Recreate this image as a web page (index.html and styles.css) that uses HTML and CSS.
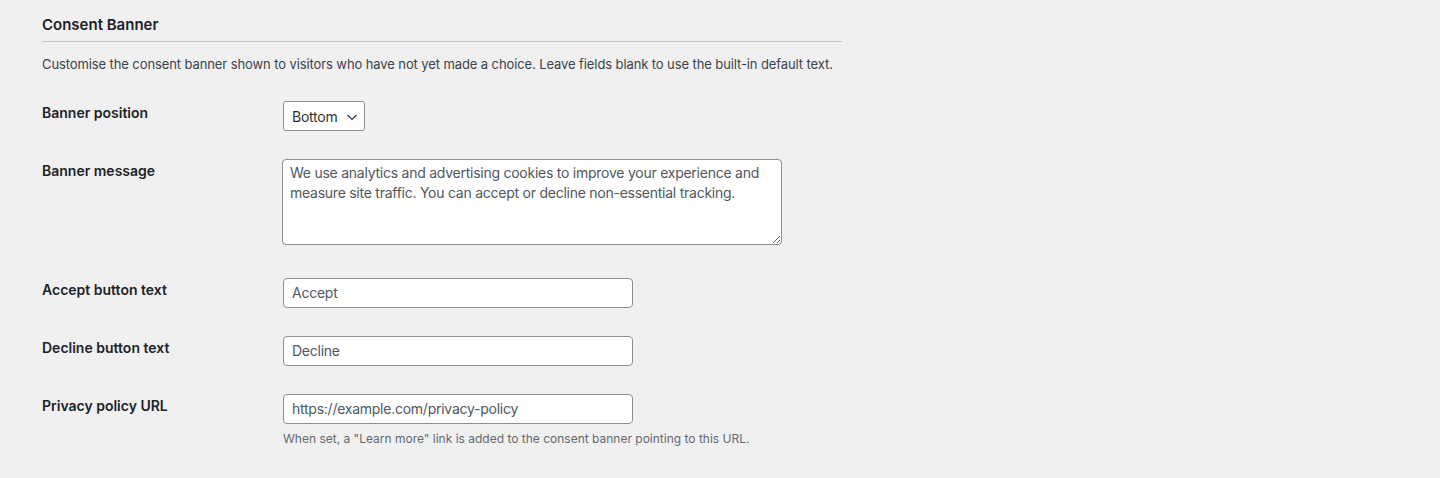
FILE: index.html
```html
<!DOCTYPE html>
<html lang="en">
<head>
    <meta charset="UTF-8">
    <meta name="viewport" content="width=device-width, initial-scale=1.0">
    <title>Consent Banner Settings</title>
    <link rel="stylesheet" href="styles.css">
</head>
<body>
    <div class="wrap">
        <h2 class="section-title">Consent Banner</h2>
        <p class="section-desc">Customise the consent banner shown to visitors who have not yet made a choice. Leave fields blank to use the built-in default text.</p>

        <table class="form-table">
            <tr>
                <th><label for="bannerPosition">Banner position</label></th>
                <td>
                    <div class="select-wrap">
                        <select id="bannerPosition">
                            <option>Bottom</option>
                            <option>Top</option>
                        </select>
                        <svg class="select-arrow" width="12" height="12" viewBox="0 0 12 12" aria-hidden="true">
                            <path d="M1.5 4 L6 8.5 L10.5 4" fill="none" stroke="#2c3338" stroke-width="1.2"/>
                        </svg>
                    </div>
                </td>
            </tr>
            <tr>
                <th><label for="bannerMessage">Banner message</label></th>
                <td class="textarea-cell">
                    <textarea id="bannerMessage" class="large-text" rows="4">We use analytics and advertising cookies to improve your experience and measure site traffic. You can accept or decline non-essential tracking.</textarea>
                </td>
            </tr>
            <tr>
                <th><label for="acceptText">Accept button text</label></th>
                <td><input type="text" id="acceptText" class="regular-text" value="Accept"></td>
            </tr>
            <tr>
                <th><label for="declineText">Decline button text</label></th>
                <td><input type="text" id="declineText" class="regular-text" value="Decline"></td>
            </tr>
            <tr>
                <th><label for="privacyUrl">Privacy policy URL</label></th>
                <td>
                    <input type="text" id="privacyUrl" class="regular-text" value="https://example.com/privacy-policy">
                    <p class="description">When set, a "Learn more" link is added to the consent banner pointing to this URL.</p>
                </td>
            </tr>
        </table>
    </div>
</body>
</html>
```

FILE: styles.css
```css
body {
    margin: 0;
    padding: 0;
    background-color: #f0f0f1;
    color: #3c434a;
    font-family: Inter, "Noto Sans", sans-serif;
    font-size: 13px;
    line-height: 1.5;
}

.wrap {
    width: 800px;
    padding: 15px 0 0 42px;
}

/* Section heading with rule underneath */
.section-title {
    margin: 0;
    padding-bottom: 6px;
    border-bottom: 1px solid #c3c4c7;
    color: #1d2327;
    font-size: 15px;
    font-weight: 600;
    line-height: 1.3;
}

.section-desc {
    margin: 13px 0 0;
    letter-spacing: -0.1px;
    white-space: nowrap;
}

.form-table {
    border-collapse: collapse;
    margin-top: 13px;
}

.form-table th {
    width: 241px;
    padding: 17px 0 0;
    text-align: left;
    vertical-align: top;
    color: #1d2327;
    font-size: 14px;
    font-weight: 600;
    line-height: 1.3;
}

.form-table td {
    padding: 14px 0;
    vertical-align: top;
}

.form-table .textarea-cell {
    padding-bottom: 13px;
}

/* Dropdown */
.select-wrap {
    position: relative;
    display: inline-block;
}

.select-wrap select {
    appearance: none;
    -webkit-appearance: none;
    width: 82px;
    height: 30px;
    padding: 0 24px 0 8px;
    border: 1px solid #8c8f94;
    border-radius: 3px;
    background: #fff;
    color: #2c3338;
    font-family: inherit;
    font-size: 14px;
    letter-spacing: -0.25px;
}

.select-arrow {
    position: absolute;
    right: 7px;
    top: 10px;
    pointer-events: none;
}

/* Text fields */
textarea,
input[type="text"] {
    box-sizing: border-box;
    border: 1px solid #8c8f94;
    border-radius: 4px;
    background: #fff;
    color: #50575e;
    font-family: inherit;
    font-size: 14px;
    letter-spacing: -0.25px;
}

.large-text {
    width: 500px;
    height: 86px;
    margin-left: -1px;
    padding: 3px 7px 2px;
    line-height: 20px;
}

.regular-text {
    width: 350px;
    height: 30px;
    padding: 0 8px;
}

.description {
    margin: 6px 0 0;
    color: #646970;
    font-size: 12px;
}
```
